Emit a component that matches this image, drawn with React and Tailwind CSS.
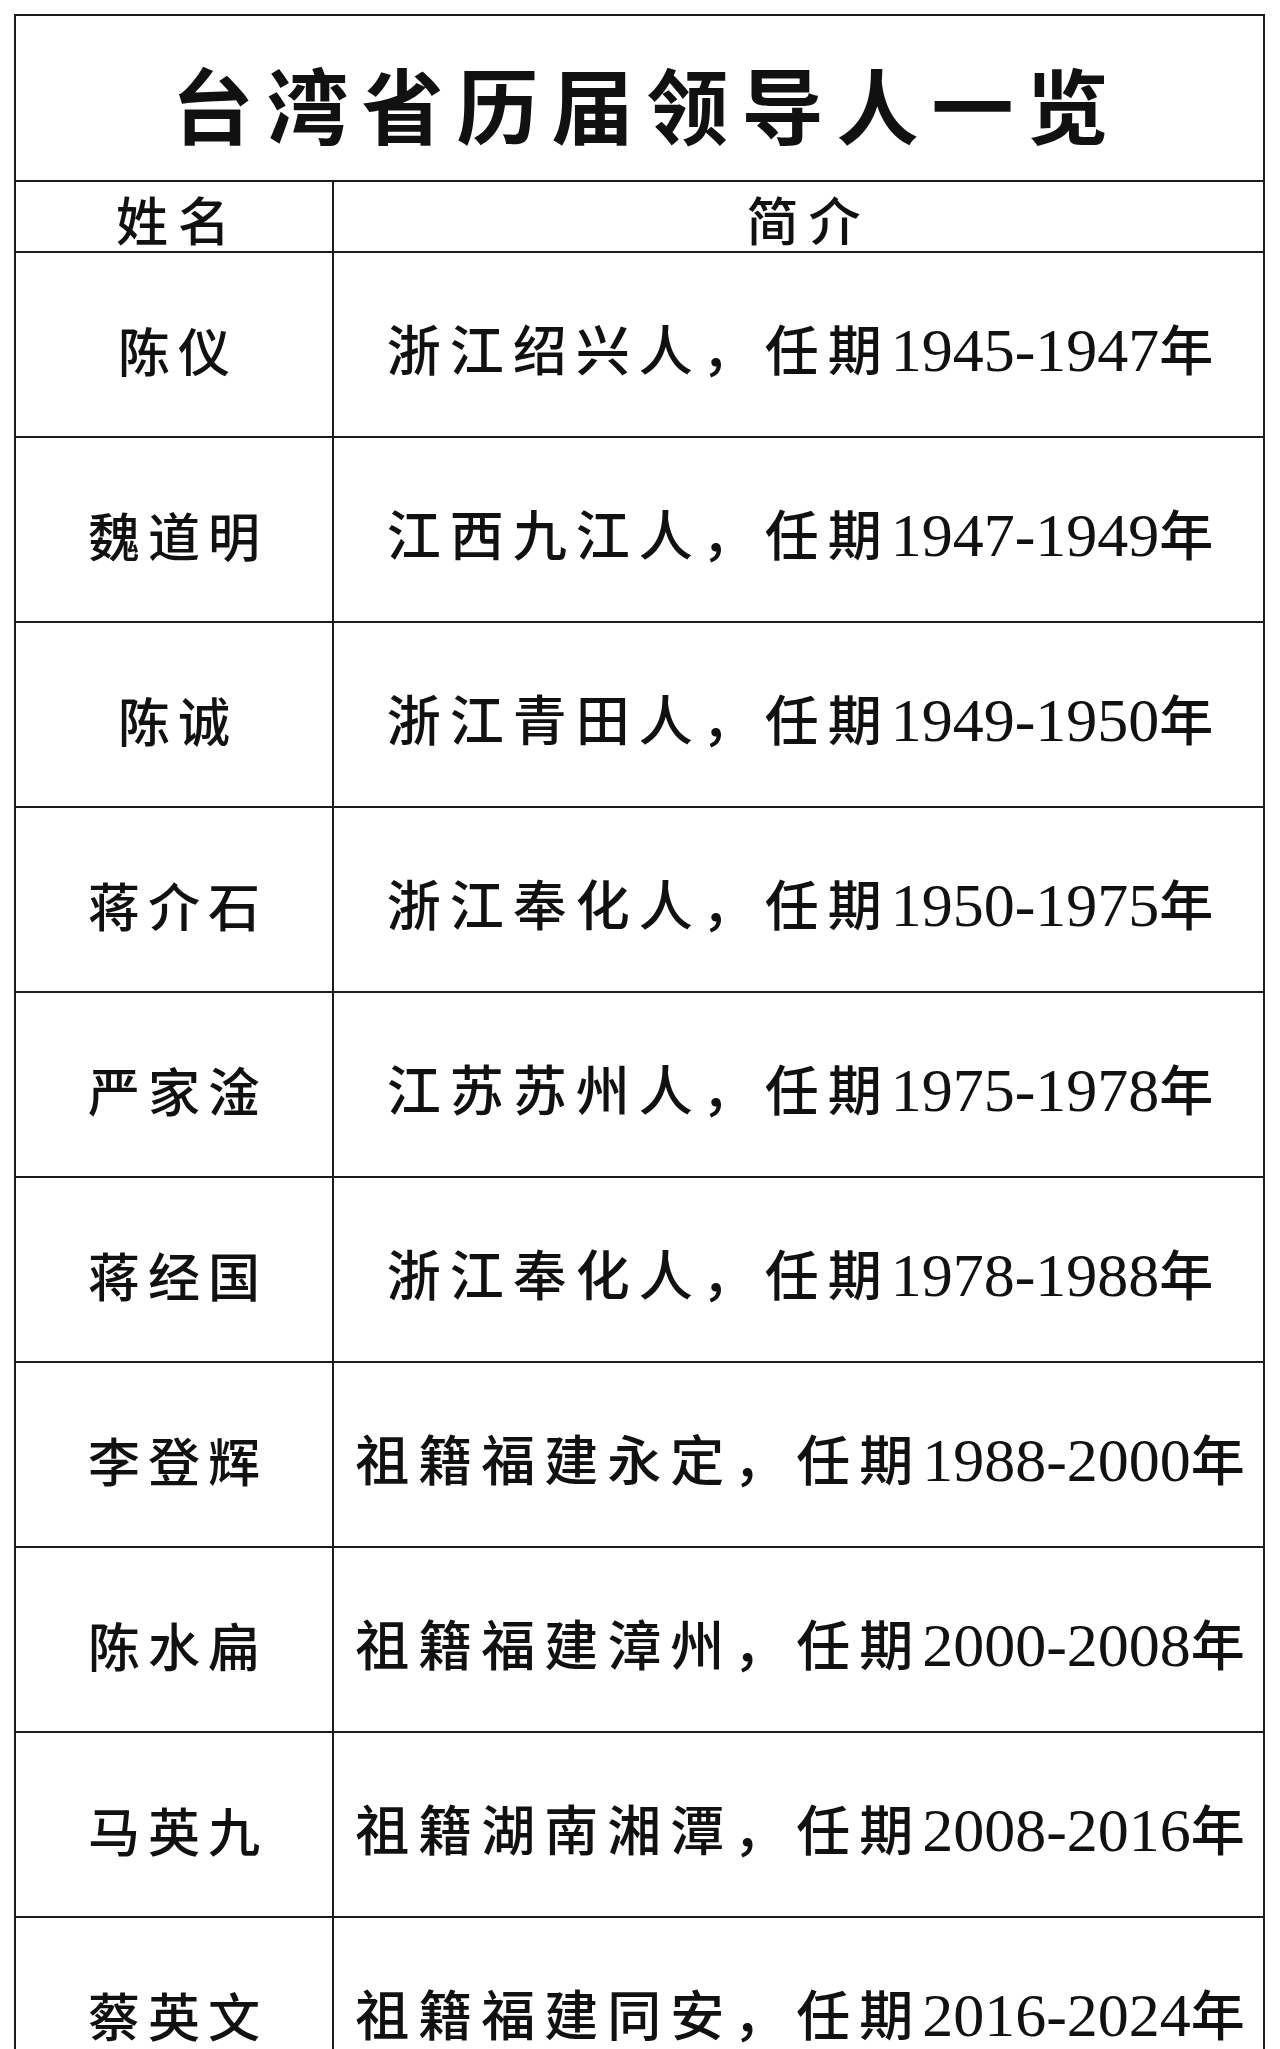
import React from "react";

const leaders = [
  { name: "陈仪", place: "浙江绍兴人，", term: "1945-1947" },
  { name: "魏道明", place: "江西九江人，", term: "1947-1949" },
  { name: "陈诚", place: "浙江青田人，", term: "1949-1950" },
  { name: "蒋介石", place: "浙江奉化人，", term: "1950-1975" },
  { name: "严家淦", place: "江苏苏州人，", term: "1975-1978" },
  { name: "蒋经国", place: "浙江奉化人，", term: "1978-1988" },
  { name: "李登辉", place: "祖籍福建永定，", term: "1988-2000" },
  { name: "陈水扁", place: "祖籍福建漳州，", term: "2000-2008" },
  { name: "马英九", place: "祖籍湖南湘潭，", term: "2008-2016" },
  { name: "蔡英文", place: "祖籍福建同安，", term: "2016-2024" },
];

const cjk = { fontFamily: '"Noto Sans CJK SC", "Noto Sans", sans-serif' };
const serif = { fontFamily: '"Liberation Serif", "Times New Roman", serif' };

const App = () => {
  return (
    <div className="bg-white w-[1280px] h-[2049px] overflow-hidden pt-[14px] pl-[14px] text-[#111]" style={cjk}>
      <div className="w-[1251px] border-2 border-[#1c1c1c] border-b-0">
        {/* title */}
        <div className="h-[164px] flex items-center justify-center pt-[10px] pl-[14px]">
          <h1 className="text-[82px] leading-none font-bold tracking-[13px]">
            台湾省历届领导人一览
          </h1>
        </div>

        {/* header */}
        <div className="flex border-t-2 border-[#1c1c1c] h-[71px]">
          <div className="w-[318px] border-r-2 border-[#1c1c1c] flex items-center justify-center pl-2 pt-1">
            <span className="text-[52px] leading-none font-medium tracking-[10px]">姓名</span>
          </div>
          <div className="flex-1 flex items-center justify-center pl-5 pt-1">
            <span className="text-[52px] leading-none font-medium tracking-[10px]">简介</span>
          </div>
        </div>

        {leaders.map((item) => (
          <div key={item.name} className="flex border-t-2 border-[#1c1c1c] h-[185px]">
            <div className="w-[318px] border-r-2 border-[#1c1c1c] flex items-center justify-center pl-2 pt-[10px]">
              <span className="text-[52px] leading-none font-medium tracking-[8px]">{item.name}</span>
            </div>
            <div className="flex-1 flex items-center justify-center pl-3 pt-[10px]">
              <span className="text-[54px] leading-none font-medium tracking-[9px] whitespace-nowrap">
                {item.place}任期
                <span className="text-[62px] font-normal tracking-normal" style={serif}>
                  {item.term}
                </span>
                年
              </span>
            </div>
          </div>
        ))}
      </div>
    </div>
  );
};

export default App;
